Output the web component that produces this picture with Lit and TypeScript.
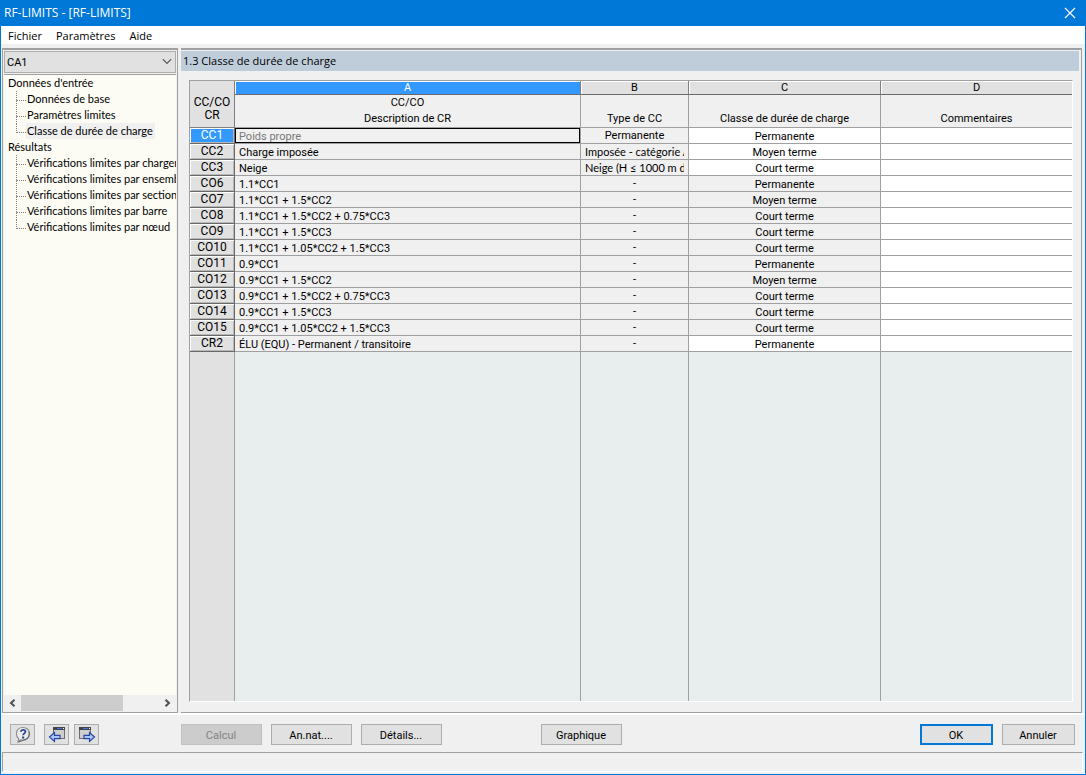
import { LitElement, html, css, svg, nothing } from "lit";
import { customElement, state } from "lit/decorators.js";
import { classMap } from "lit/directives/class-map.js";

interface LoadRow {
  id: string;
  description: string;
  type: string;
  duration: string;
  editable: boolean;
}

const row = (id: string, description: string, type: string, duration: string, editable = false): LoadRow =>
  ({ id, description, type, duration, editable });

const ROWS: LoadRow[] = [
  row("CC1", "Poids propre", "Permanente", "Permanente", true),
  row("CC2", "Charge imposée", "Imposée - catégorie A", "Moyen terme", true),
  row("CC3", "Neige", "Neige (H ≤ 1000 m d'altitude)", "Court terme", true),
  row("CO6", "1.1*CC1", "-", "Permanente"),
  row("CO7", "1.1*CC1 + 1.5*CC2", "-", "Moyen terme"),
  row("CO8", "1.1*CC1 + 1.5*CC2 + 0.75*CC3", "-", "Court terme"),
  row("CO9", "1.1*CC1 + 1.5*CC3", "-", "Court terme"),
  row("CO10", "1.1*CC1 + 1.05*CC2 + 1.5*CC3", "-", "Court terme"),
  row("CO11", "0.9*CC1", "-", "Permanente"),
  row("CO12", "0.9*CC1 + 1.5*CC2", "-", "Moyen terme"),
  row("CO13", "0.9*CC1 + 1.5*CC2 + 0.75*CC3", "-", "Court terme"),
  row("CO14", "0.9*CC1 + 1.5*CC3", "-", "Court terme"),
  row("CO15", "0.9*CC1 + 1.05*CC2 + 1.5*CC3", "-", "Court terme"),
  row("CR2", "ÉLU (EQU) - Permanent / transitoire", "-", "Permanente", true),
];

const TREE = [
  { label: "Données d'entrée", items: ["Données de base", "Paramètres limites", "Classe de durée de charge"] },
  {
    label: "Résultats",
    items: [
      "Vérifications limites par chargement",
      "Vérifications limites par ensemble de barres",
      "Vérifications limites par section",
      "Vérifications limites par barre",
      "Vérifications limites par nœud",
    ],
  },
];

const helpIcon = svg`
  <svg width="18" height="18" viewBox="0 0 18 18" aria-hidden="true">
    <path d="M9 1.500c4 0 6.300 2.600 6.300 6.200 0 3.700-2.500 6.300-6.300 6.300-.8 0-1.500-.1-2.100-.3L4 16l.7-3.300C3.100 11.500 2.400 9.800 2.400 7.700 2.400 4.100 5 1.500 9 1.500z" fill="#ececec" stroke="#909090" stroke-width="1.200"/>
    <path d="M15 5.500c1.200 3.800-.7 7.300-4.500 8.300L4.500 16" fill="none" stroke="#6c6c6c" stroke-width="1.200"/>
    <path d="M6.600 5.800c.3-1.300 1.200-1.900 2.500-1.900 1.400 0 2.300.7 2.300 1.800 0 1.600-2.200 1.800-2.300 3.600" fill="none" stroke="#2c4796" stroke-width="1.800"/>
    <rect x="8" y="10.500" width="2.200" height="2" fill="#2c4796"/>
  </svg>`;

const windowShape = svg`
  <rect x="0.500" y="0.500" width="11" height="11" fill="#cfcfcf" stroke="#6e6e6e"/>
  <rect x="0" y="0" width="12" height="3" fill="#41434d"/>
  <rect x="4" y="1" width="5" height="1" fill="#4d6fd0"/>
  <rect x="10" y="1" width="1" height="1" fill="#fff"/>`;

const previousIcon = svg`
  <svg width="18" height="18" viewBox="0 0 18 18" aria-hidden="true">
    <g transform="translate(5 1)">${windowShape}</g>
    <path d="M1.500 11 6.500 6.500v2.800h5.500v3.400H6.500v2.800z" fill="#a9c6ff" stroke="#27479e" stroke-width="1.200"/>
  </svg>`;

const nextIcon = svg`
  <svg width="18" height="18" viewBox="0 0 18 18" aria-hidden="true">
    <g transform="translate(1 1)">${windowShape}</g>
    <path d="M16.500 11 11.500 6.500v2.800H6v3.400h5.500v2.800z" fill="#a9c6ff" stroke="#27479e" stroke-width="1.200"/>
  </svg>`;

@customElement("app-root")
export class AppRoot extends LitElement {
  @state() private selectedRow = "CC1";
  @state() private selectedPage = "Classe de durée de charge";

  static styles = css`
    :host {
      --ui: Roboto, "Liberation Sans", sans-serif;
      --compact: Lato, Roboto, sans-serif;
      --line: #a0a0a0;
      --face: #f0f0f0;
      display: flex;
      flex-direction: column;
      box-sizing: border-box;
      height: 100vh;
      border: 1px solid #0078d7;
      background: var(--face);
      color: #000;
      font: 11px/16px var(--ui);
    }
    * { box-sizing: border-box; }
    button, select { font: inherit; color: inherit; margin: 0; border-radius: 0; }
    svg { display: block; }

    .titlebar {
      display: flex;
      align-items: center;
      justify-content: space-between;
      height: 25px;
      padding: 0 8px 0 3px;
      background: #0078d7;
      color: #fff;
      font: 12px/23px "Open Sans", sans-serif;
    }
    .titlebar h1 { margin: 0; font: inherit; height: 25px; }
    .close { height: 25px; padding: 0 0 2px; border: 0; background: none; }

    .menubar {
      display: flex;
      gap: 14px;
      height: 18px;
      padding: 1px 7px 0;
      background: #fff;
      font: 11px/17px "Open Sans", sans-serif;
    }
    .menubar button { padding: 0; border: 0; background: none; }

    .main {
      flex: 1;
      display: grid;
      grid-template-columns: 176px minmax(0, 1fr);
      gap: 3px;
      min-height: 0;
      margin-top: 4px;
      padding: 0 3px 0 1px;
      border-bottom: 2px solid #fff;
    }
    .side, .content {
      display: flex;
      flex-direction: column;
      min-width: 0;
      min-height: 0;
      border-top: 2px solid var(--line);
      border-right: 1px solid var(--line);
      border-bottom: 1px solid var(--line);
    }
    .side { border-left: 1px solid var(--line); padding: 1px; }
    .content { padding-top: 1px; }

    .case { position: relative; height: 22px; }
    .case select {
      appearance: none;
      width: 100%;
      height: 22px;
      padding: 1px 2px 0;
      border: 1px solid #adadad;
      background: #e1e1e1;
    }
    .case svg { position: absolute; right: 4px; top: 7px; pointer-events: none; }

    .tree {
      flex: 1;
      min-height: 0;
      overflow: hidden;
      margin: 1px 0 0;
      padding: 0 0 0 4px;
      border-top: 1px solid var(--line);
      background: #fcfcf4;
      list-style: none;
      white-space: nowrap;
      font-family: var(--compact);
      line-height: 15px;
    }
    .tree ul { margin: 0; padding: 0 0 0 8px; list-style: none; }
    .tree a { height: 16px; padding: 0 2px 0 1px; color: inherit; text-decoration: none; }
    .tree .group { display: block; height: 16px; }
    .branch { display: flex; height: 16px; }
    .branch::before {
      content: "";
      flex: none;
      width: 9px;
      height: 9px;
      border-left: 1px dotted #808080;
      border-bottom: 1px dotted #808080;
    }
    .branch:not(:last-child) { background: linear-gradient(#808080 1px, transparent 1px) 0 0 / 1px 2px repeat-y; }
    .branch:not(:last-child)::before { border-left-color: transparent; }
    .tree a.current { background: #f0f0f0; }

    .scroll { display: flex; height: 16px; background: #f0f0f0; }
    .scroll button { display: grid; place-items: center; width: 17px; padding: 0; border: 0; background: none; }
    .track { flex: 1; }
    .thumb { width: 74%; height: 100%; background: #cdcdcd; }

    .content h2 {
      margin: 0 2px 0 0;
      padding: 0 2px;
      height: 20px;
      background: #bfcddb;
      font: 11px/20px "Open Sans", sans-serif;
    }
    .sheet {
      flex: 1;
      min-height: 0;
      margin: 9px 8px 10px;
      border: 1px solid #fff;
      border-top-color: var(--line);
      border-left-color: var(--line);
    }
    table {
      width: 100%;
      height: 100%;
      table-layout: fixed;
      border-collapse: separate;
      border-spacing: 0;
      font: 11px/15px var(--ui);
    }
    .c-id { width: 45px; }
    .c-b { width: 108px; }
    .c-c { width: 192px; }
    .c-d { width: 191px; }
    th, td {
      height: 16px;
      padding: 0;
      border: 0 solid var(--line);
      border-width: 0 1px 1px 0;
      font-weight: 400;
      text-align: center;
      white-space: nowrap;
      overflow: hidden;
    }
    th:last-child, td:last-child { border-right: 0; }
    .letter th {
      height: 14px;
      line-height: 13px;
      background: #e1e1e1;
      border-bottom-color: #696969;
      border-right-color: #808080;
      box-shadow: inset 1px 1px #fff;
    }
    .letter th.on { background: #3399ff; color: #fff; }
    .letter th.corner {
      padding-top: 9px;
      border-color: #808080;
      box-shadow: none;
      font-size: 12px;
    }
    .names th { height: 33px; vertical-align: bottom; line-height: 16px; background: var(--face); }
    tbody th {
      background: #e1e1e1;
      border-bottom-color: #696969;
      border-right-color: #696969;
      box-shadow: inset 1px 1px #fff, inset -1px -1px #b8b8b8;
      font-size: 12px;
      line-height: 14px;
      vertical-align: top;
    }
    tbody th.on { background: #3399ff; color: #fff; }
    tbody td { background: var(--face); padding-top: 2px; line-height: 13px; }
    tbody .desc { padding: 2px 4px 0; text-align: left; }
    tbody .desc.on { color: #787878; box-shadow: inset 0 0 0 1px #000; }
    tbody .type { padding: 0 4px; vertical-align: top; line-height: 15px; }
    .type div { overflow: hidden; }
    .type.long { text-align: left; font-family: var(--compact); }
    tbody .open { background: #fff; }
    .filler th, .filler td { height: auto; border-bottom: 0; background: #e8eeee; }
    .filler th { background: #e1e1e1; box-shadow: none; border-right-color: var(--line); }

    .actions {
      display: flex;
      align-items: center;
      height: 37px;
      padding: 2px 10px 0 9px;
    }
    .actions button {
      display: grid;
      place-items: center;
      width: 81px;
      height: 21px;
      padding: 2px 1px 0 0;
      border: 1px solid #adadad;
      background: #e1e1e1;
      margin-right: 9px;
    }
    .actions .tool { width: 25px; margin-right: 5px; padding: 0; }
    .actions .help { margin-right: 9px; }
    .tools { display: flex; width: 171px; }
    .actions button:disabled { border-color: #bfbfbf; background: #ccc; color: #838383; }
    .actions .graph { margin-left: 90px; }
    .dialog { display: flex; gap: 9px; margin-left: auto; }
    .dialog button { width: 73px; margin: 0; }
    .actions .ok { border: 2px solid #0078d7; }

    .status {
      height: 20px;
      margin: 0 2px 2px 1px;
      border: 1px solid #fff;
      border-top-color: var(--line);
      border-left-color: var(--line);
    }
  `;

  private select(event: Event, label: string) {
    event.preventDefault();
    this.selectedPage = label;
  }

  private renderTree() {
    return html`
      <ul class="tree">
        ${TREE.map((group) => html`
          <li>
            <span class="group">${group.label}</span>
            <ul>
              ${group.items.map((item) => html`
                <li class="branch">
                  <a href="#" class=${classMap({ current: item === this.selectedPage })}
                    @click=${(e: Event) => this.select(e, item)}>${item}</a>
                </li>`)}
            </ul>
          </li>`)}
      </ul>`;
  }

  private renderRow(r: LoadRow) {
    const on = r.id === this.selectedRow;
    return html`
      <tr @click=${() => (this.selectedRow = r.id)}>
        <th scope="row" class=${on ? "on" : nothing}>${r.id}</th>
        <td class=${classMap({ desc: true, on })}>${r.description}</td>
        <td class=${classMap({ type: true, long: r.type.length > 12 })}><div>${r.type}</div></td>
        <td class=${r.editable ? "open" : nothing}>${r.duration}</td>
        <td class="open"></td>
      </tr>`;
  }

  render() {
    return html`
      <header class="titlebar">
        <h1>RF-LIMITS - [RF-LIMITS]</h1>
        <button class="close" aria-label="Fermer">
          <svg width="14" height="14" viewBox="0 0 14 14"><path d="M2 2l10 10M12 2L2 12" stroke="#fff" stroke-width="1.200"/></svg>
        </button>
      </header>
      <nav class="menubar">
        <button>Fichier</button><button>Paramètres</button><button>Aide</button>
      </nav>
      <div class="main">
        <aside class="side">
          <div class="case">
            <select aria-label="Cas"><option>CA1</option></select>
            <svg width="10" height="7" viewBox="0 0 10 7"><path d="M.8 1.200 5 5.400l4.200-4.200" fill="none" stroke="#555" stroke-width="1.200"/></svg>
          </div>
          ${this.renderTree()}
          <div class="scroll">
            <button aria-label="Défiler à gauche"><svg width="7" height="8" viewBox="0 0 7 8"><path d="M5.500.7 2 4l3.500 3.300" fill="none" stroke="#505050" stroke-width="2"/></svg></button>
            <div class="track"><div class="thumb"></div></div>
            <button aria-label="Défiler à droite"><svg width="7" height="8" viewBox="0 0 7 8"><path d="M1.500.7 5 4 1.500 7.300" fill="none" stroke="#505050" stroke-width="2"/></svg></button>
          </div>
        </aside>
        <section class="content">
          <h2>1.3 Classe de durée de charge</h2>
          <div class="sheet">
            <table>
              <colgroup><col class="c-id"><col><col class="c-b"><col class="c-c"><col class="c-d"></colgroup>
              <thead>
                <tr class="letter">
                  <th class="corner" rowspan="2">CC/CO<br>CR</th>
                  <th class="on">A</th><th>B</th><th>C</th><th>D</th>
                </tr>
                <tr class="names">
                  <th scope="col">CC/CO<br>Description de CR</th>
                  <th scope="col">Type de CC</th>
                  <th scope="col">Classe de durée de charge</th>
                  <th scope="col">Commentaires</th>
                </tr>
              </thead>
              <tbody>
                ${ROWS.map((r) => this.renderRow(r))}
                <tr class="filler"><th></th><td></td><td></td><td></td><td></td></tr>
              </tbody>
            </table>
          </div>
        </section>
      </div>
      <footer class="actions">
        <div class="tools">
          <button class="tool help" aria-label="Aide">${helpIcon}</button>
          <button class="tool" aria-label="Précédent">${previousIcon}</button>
          <button class="tool" aria-label="Suivant">${nextIcon}</button>
        </div>
        <button disabled>Calcul</button>
        <button>An.nat....</button>
        <button>Détails...</button>
        <button class="graph">Graphique</button>
        <div class="dialog">
          <button class="ok">OK</button>
          <button>Annuler</button>
        </div>
      </footer>
      <div class="status"></div>
    `;
  }
}
